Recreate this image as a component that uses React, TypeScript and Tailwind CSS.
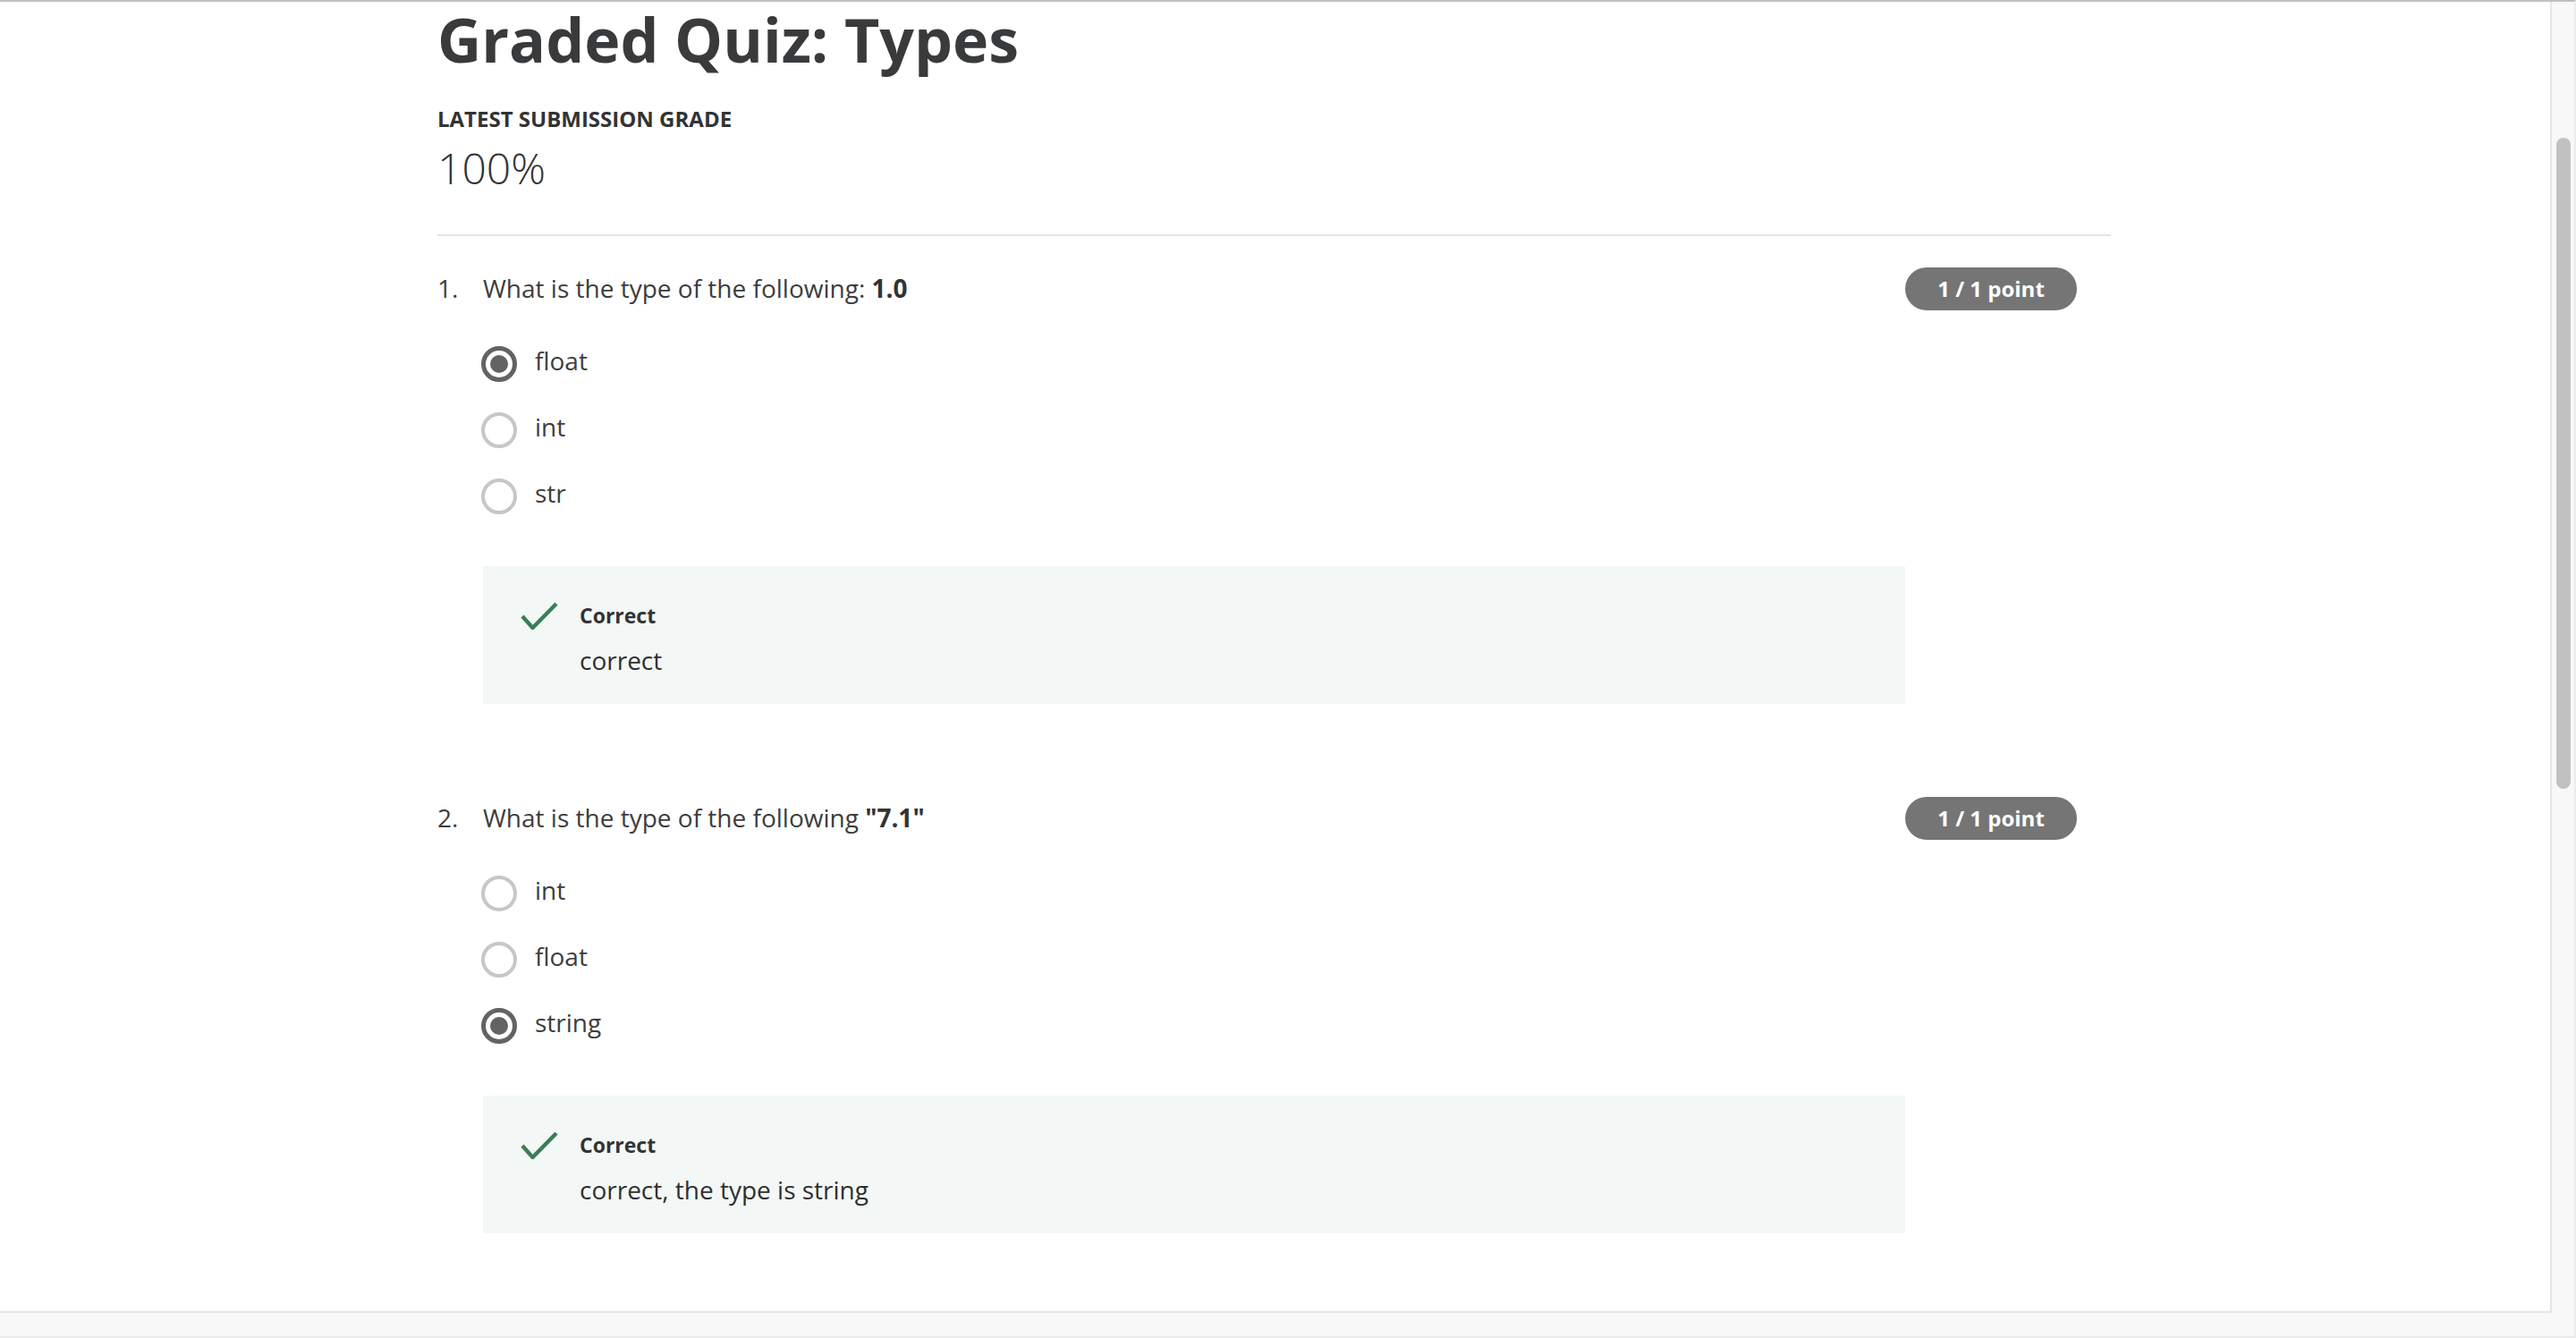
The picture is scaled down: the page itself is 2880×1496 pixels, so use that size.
const questions = [
  {
    num: 1,
    text: 'What is the type of the following: ',
    bold: '1.0',
    options: ['float', 'int', 'str'],
    selected: 0,
    feedback: 'correct',
  },
  {
    num: 2,
    text: 'What is the type of the following ',
    bold: '"7.1"',
    options: ['int', 'float', 'string'],
    selected: 2,
    feedback: 'correct, the type is string',
  },
];

function Radio({ checked }: { checked: boolean }) {
  if (checked) {
    return (
      <span className="-ml-[2px] mt-[4px] flex h-[40px] w-[40px] shrink-0 items-center justify-center rounded-full border-[5px] border-[#636363]">
        <span className="h-[20px] w-[20px] rounded-full bg-[#636363]" />
      </span>
    );
  }
  return <span className="-ml-[2px] mt-[4px] h-[40px] w-[40px] shrink-0 rounded-full border-[4px] border-[#c7c7c7]" />;
}

function CheckIcon() {
  return (
    <svg width="42" height="31" viewBox="0 0 42 31" className="mt-[1px] shrink-0">
      <polyline points="2,16 13.5,29 40,2" fill="none" stroke="#3b7d58" strokeWidth="4.4" />
    </svg>
  );
}

type Q = (typeof questions)[number];

function Question({ q }: { q: Q }) {
  return (
    <section className="flex items-start">
      <span className="w-[51px] shrink-0 text-[28px] leading-[42px] text-[#3d3d3d]">{q.num}.</span>
      <div className="flex-1">
        <p className="text-[28px] leading-[42px] text-[#3d3d3d]">
          {q.text}
          <span className="font-bold text-[#333]">{q.bold}</span>
        </p>

        <div className="mt-[40px] flex flex-col gap-[30px]">
          {q.options.map((opt, i) => (
            <label key={opt} className="flex items-start gap-[20px]">
              <Radio checked={i === q.selected} />
              <span className="text-[28px] leading-[40px] text-[#3d3d3d]">{opt}</span>
            </label>
          ))}
        </div>

        {/* Feedback */}
        <div className="mt-[58px] flex gap-[24px] bg-[#f3f8f6] pb-[29px] pl-[42px] pt-[39px]">
          <CheckIcon />
          <div>
            <div className="text-[23px] font-bold leading-[32px] text-[#333]">Correct</div>
            <div className="mt-[14px] text-[28px] leading-[40px] text-[#2f2f2f]">{q.feedback}</div>
          </div>
        </div>
      </div>
      <span className="-mt-[2px] mr-[38px] flex h-[48px] w-[192px] shrink-0 items-center justify-center rounded-full bg-[#757575] text-[24px] font-bold text-white">
        1 / 1 point
      </span>
    </section>
  );
}

export default function App() {
  return (
    <div className="flex h-[1496px] w-[2880px] flex-col overflow-hidden border-b-2 border-r-2 border-t-2 border-b-[#ececec] border-r-[#ececec] border-t-[#bfbfbf] bg-[#f8f8f8] font-['Open_Sans',sans-serif]">
      <div className="flex">
        <div className="h-[1466px] w-[2853px] shrink-0 overflow-hidden border-b-2 border-r-2 border-[#e6e6e6] bg-white">
          <main className="ml-[489px] w-[1871px]">
            <h1 className="text-[68px] font-bold leading-[84px] text-[#383a3c]">Graded Quiz: Types</h1>
            <div className="mt-[31px] text-[24px] font-bold leading-[32px] text-[#333]">LATEST SUBMISSION GRADE</div>
            <div className="mt-[11px] text-[48px] font-light leading-[56px] text-[#333]">100%</div>
            <div className="mt-[46px] h-[2px] bg-[#e4e4e4]" />

            <div className="mt-[37px] flex flex-col gap-[106px]">
              {questions.map((q) => (
                <Question key={q.num} q={q} />
              ))}
            </div>
          </main>
        </div>

        {/* Scrollbar */}
        <div className="flex-1 pl-[5px] pr-[4px] pt-[152px]">
          <div className="h-[728px] rounded-full bg-[#c1c1c1]" />
        </div>
      </div>
      <div className="flex-1" />
    </div>
  );
}
